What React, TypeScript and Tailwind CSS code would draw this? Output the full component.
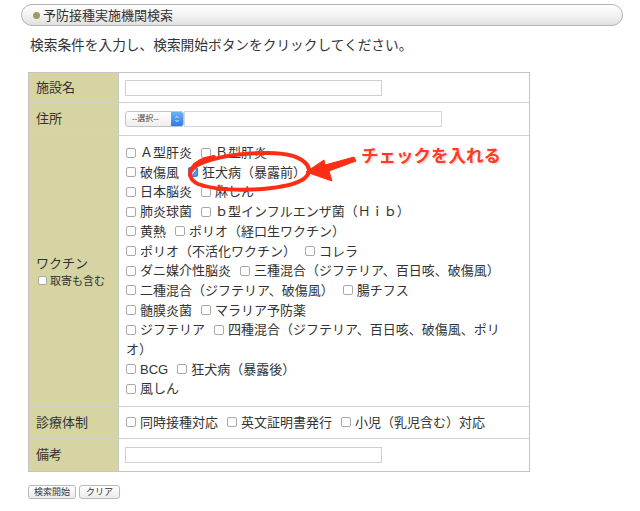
const Box = ({ checked = false, small = false }: { checked?: boolean; small?: boolean }) => (
    <span
        className={`relative inline-flex items-center justify-center align-middle -top-[1px] rounded-[2px] border ${
            small ? "w-[9px] h-[9px] mr-[3px]" : "w-[10px] h-[10px] mr-[4px]"
        } ${checked ? "bg-[#4b94ea] border-[#3a7fd6]" : "bg-white border-[#a9a9a9]"}`}
    >
        {checked && (
            <svg viewBox="0 0 10 10" className="w-[8px] h-[8px]">
                <path d="M2.2 5.2 L4.2 7.2 L7.8 2.8" fill="none" stroke="white" strokeWidth="1.4" strokeLinecap="round" strokeLinejoin="round" />
            </svg>
        )}
    </span>
);

const Item = ({ label, checked = false, last = false }: { label: string; checked?: boolean; last?: boolean }) => (
    <span className={last ? "" : "mr-[9px]"}>
        <Box checked={checked} />
        {label}
    </span>
);

const vaccines: [string, string?, boolean?][] = [
    ["Ａ型肝炎", "Ｂ型肝炎"],
    ["破傷風", "狂犬病（暴露前）", true],
    ["日本脳炎", "麻しん"],
    ["肺炎球菌", "ｂ型インフルエンザ菌（Ｈｉｂ）"],
    ["黄熱", "ポリオ（経口生ワクチン）"],
    ["ポリオ（不活化ワクチン）", "コレラ"],
    ["ダニ媒介性脳炎", "三種混合（ジフテリア、百日咳、破傷風）"],
    ["二種混合（ジフテリア、破傷風）", "腸チフス"],
    ["髄膜炎菌", "マラリア予防薬"],
    ["ジフテリア", "四種混合（ジフテリア、百日咳、破傷風、ポリオ）"],
    ["BCG", "狂犬病（暴露後）"],
    ["風しん"],
];

export default function App() {
    return (
        <div className="relative w-[640px] h-[511px] bg-white overflow-hidden text-[#333] font-['Liberation_Sans','Noto_Sans_CJK_JP',sans-serif]">
            {/* 見出し */}
            <div className="ml-[21px] mt-[4px] w-[602px] h-[22px] rounded-full border border-[#b5b5b5] bg-gradient-to-b from-white via-[#f3f3f3] to-[#e0e0e0] flex items-center pl-[11px]">
                <span className="w-[7px] h-[7px] rounded-full bg-[#9d9b62] mr-[3px]" />
                <span className="text-[13px] leading-none">予防接種実施機関検索</span>
            </div>

            <p className="ml-[30px] mt-[10px] text-[13.7px] leading-[20px]">
                検索条件を入力し、検索開始ボタンをクリックしてください。
            </p>

            {/* 検索フォーム */}
            <div className="ml-[28px] mt-[16px] w-[502px] border border-[#c4c4c4] text-[13px]">
                <div className="flex h-[30px] border-b border-[#d0d0d0]">
                    <div className="w-[90px] shrink-0 bg-[#d5d4a2] border-r border-[#c8c8c8] pl-[7px] flex items-center">施設名</div>
                    <div className="flex-1 pl-[6px] flex items-center">
                        <input type="text" className="w-[257px] h-[16px] border border-[#cfcfcf] bg-white" />
                    </div>
                </div>

                <div className="flex h-[33px] border-b border-[#d0d0d0]">
                    <div className="w-[90px] shrink-0 bg-[#d5d4a2] border-r border-[#c8c8c8] pl-[7px] flex items-center">住所</div>
                    <div className="flex-1 pl-[6px] flex items-center">
                        <div className="w-[59px] h-[16px] flex items-center justify-between border border-[#c4c4c4] rounded-[3px] bg-gradient-to-b from-white to-[#eeeeee] overflow-hidden">
                            <span className="text-[8px] leading-none pl-[6px] text-[#444]">--選択--</span>
                            <span className="w-[12px] h-full bg-gradient-to-b from-[#6cb2f7] to-[#2b7be4] flex items-center justify-center">
                                <svg viewBox="0 0 8 12" className="w-[6px] h-[10px]">
                                    <path d="M2 4.5 L4 2.5 L6 4.5 M2 7.5 L4 9.5 L6 7.5" fill="none" stroke="white" strokeWidth="1.2" />
                                </svg>
                            </span>
                        </div>
                        <input type="text" className="w-[258px] h-[16px] border border-[#d6d6d6] bg-white" />
                    </div>
                </div>

                <div className="flex border-b border-[#d0d0d0]">
                    <div className="w-[90px] shrink-0 bg-[#d5d4a2] border-r border-[#c8c8c8] pl-[7px] flex flex-col justify-center">
                        <span className="leading-[19px]">ワクチン</span>
                        <span className="text-[11px] leading-[16px] pl-[2px]">
                            <Box small />
                            取寄も含む
                        </span>
                    </div>
                    <div className="flex-1 pl-[7px] pr-[12px] py-[7px] leading-[19.7px]">
                        {vaccines.map(([a, b, c], i) => (
                            <div key={i}>
                                <Item label={a} last={!b} />
                                {b && <Item label={b} checked={!!c} last />}
                            </div>
                        ))}
                    </div>
                </div>

                <div className="flex h-[32px] border-b border-[#d0d0d0]">
                    <div className="w-[90px] shrink-0 bg-[#d5d4a2] border-r border-[#c8c8c8] pl-[7px] flex items-center">診療体制</div>
                    <div className="flex-1 pl-[7px] flex items-center">
                        <span>
                            <Item label="同時接種対応" />
                            <Item label="英文証明書発行" />
                            <Item label="小児（乳児含む）対応" last />
                        </span>
                    </div>
                </div>

                <div className="flex h-[32px]">
                    <div className="w-[90px] shrink-0 bg-[#d5d4a2] border-r border-[#c8c8c8] pl-[7px] flex items-center">備考</div>
                    <div className="flex-1 pl-[6px] flex items-center">
                        <input type="text" className="w-[257px] h-[16px] border border-[#cfcfcf] bg-white" />
                    </div>
                </div>
            </div>

            <div className="ml-[28px] mt-[13px] flex gap-[3px]">
                <button className="h-[14px] px-[5px] text-[9px] leading-none border border-[#b9b9b9] rounded-[3px] bg-gradient-to-b from-white to-[#ebebeb] text-[#333]">
                    検索開始
                </button>
                <button className="h-[14px] px-[6px] text-[9px] leading-none border border-[#b9b9b9] rounded-[3px] bg-gradient-to-b from-white to-[#ebebeb] text-[#333]">
                    クリア
                </button>
            </div>

            {/* 注釈 */}
            <svg className="absolute left-0 top-0 pointer-events-none" width="640" height="511">
                <path
                    d="M214 157 C192 160 182 176 198 184 C222 193 282 191 302 180 C318 170 306 153 268 153 C236 153 206 158 191 169"
                    fill="none"
                    stroke="#ff2d14"
                    strokeWidth="4"
                    strokeLinecap="round"
                />
                <path d="M219 186 L221 190" stroke="#ff2d14" strokeWidth="3" strokeLinecap="round" />
                <path
                    d="M306 172 L324 160 L325 165 L354 157 L356 161 L329 171 L332 181 Z"
                    fill="#ff2d14"
                    stroke="#ff2d14"
                    strokeWidth="1"
                    strokeLinejoin="round"
                />
            </svg>
            <div className="absolute left-[361px] top-[145px] text-[17.5px] leading-[22px] font-bold text-[#ff3a1e] [text-shadow:0_0_2px_#fff,1px_1px_2px_rgba(0,0,0,0.25)]">
                チェックを入れる
            </div>
        </div>
    );
}
